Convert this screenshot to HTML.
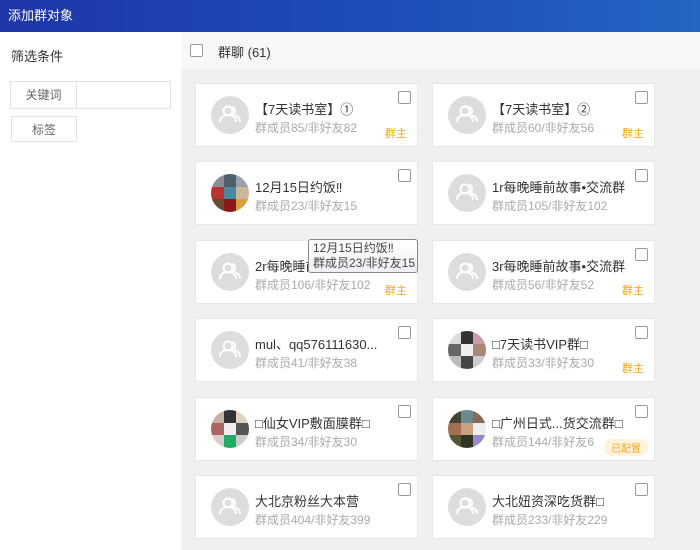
<!DOCTYPE html><html><head><meta charset="utf-8"><style>
*{margin:0;padding:0;box-sizing:border-box}
body{width:700px;height:550px;overflow:hidden;font-family:"Liberation Sans","Noto Sans CJK SC",sans-serif;background:#f0f0f0;position:relative}
.hd{position:absolute;left:0;top:0;width:700px;height:32px;background:linear-gradient(90deg,#1d36a8,#1f4fb8 60%,#2366c4);color:#fff;font-size:13px;line-height:32px;padding-left:8px}
.lp{position:absolute;left:0;top:32px;width:181px;height:518px;background:#fff}
.lp .t{position:absolute;left:11px;top:14px;font-size:13px;color:#333}
.box{position:absolute;border:1px solid #e3e3e3;font-size:12px;color:#666;text-align:center;line-height:26px}
.th{position:absolute;left:181px;top:32px;width:519px;height:37px;background:#f7f7f7;font-size:13px;color:#333}
.cb{position:absolute;width:13px;height:13px;border:1px solid #999;border-radius:2px;background:#fff}
.card{position:absolute;width:223px;height:64px;background:#fff;border:1px solid #e8e8e8}
.av{position:absolute;left:15px;top:12px;width:38px;height:38px;border-radius:50%;background:#ddd;overflow:hidden}
.nm{position:absolute;left:59px;top:15px;font-size:13px;color:#333;white-space:nowrap}
.sb{position:absolute;left:59px;top:35px;font-size:12px;color:#aaa;white-space:nowrap}
.card .cb{left:202px;top:7px}
.tag{position:absolute;right:10px;bottom:5px;font-size:11px;color:#f5a623}
.pill{position:absolute;right:6px;bottom:4px;font-size:10px;color:#f5a623;background:#fff3dc;border-radius:8px;padding:1px 7px}
.mz{display:grid;grid-template-columns:repeat(3,1fr);width:38px;height:38px}
</style></head><body>
<div class="hd">添加群对象</div>
<div class="lp"><div class="t">筛选条件</div>
<div class="box" style="left:10px;top:49px;width:161px;height:28px"><div style="width:66px;border-right:1px solid #e3e3e3">关键词</div></div>
<div class="box" style="left:11px;top:84px;width:66px;height:26px">标签</div></div>
<div class="th"><div class="cb" style="left:9px;top:12px"></div><div style="position:absolute;left:37px;top:10px">群聊 (61)</div></div>
<svg width="0" height="0" style="position:absolute"><defs><symbol id="u" viewBox="0 0 38 38"><g fill="none" stroke="#fff" stroke-width="2"><circle cx="17" cy="15" r="4.5"/><path d="M9 26c0-5 3.5-7 8-7s8 2 8 7M21 10.8a4.5 4.5 0 0 1 0 8.5M24 19.5c3 .8 5 3 5 6.5"/></g></symbol></defs></svg>

<div class="card" style="left:195px;top:83px"><div class="av"><svg width="38" height="38"><use href="#u"/></svg></div><div class="nm">【7天读书室】①</div><div class="sb">群成员85/非好友82</div><div class="cb"></div><div class="tag">群主</div></div>
<div class="card" style="left:432px;top:83px"><div class="av"><svg width="38" height="38"><use href="#u"/></svg></div><div class="nm">【7天读书室】②</div><div class="sb">群成员60/非好友56</div><div class="cb"></div><div class="tag">群主</div></div>

<div class="card" style="left:195px;top:161px"><div class="av"><div class="mz"><i style="background:#8a8f96"></i><i style="background:#50606a"></i><i style="background:#9aa3ad"></i><i style="background:#b33"></i><i style="background:#4a8aa0"></i><i style="background:#c9b79a"></i><i style="background:#6a4a30"></i><i style="background:#8a1a1a"></i><i style="background:#d9a040"></i></div></div><div class="nm">12月15日约饭‼</div><div class="sb">群成员23/非好友15</div><div class="cb"></div></div>
<div class="card" style="left:432px;top:161px"><div class="av"><svg width="38" height="38"><use href="#u"/></svg></div><div class="nm">1r每晚睡前故事•交流群</div><div class="sb">群成员105/非好友102</div><div class="cb"></div></div>

<div class="card" style="left:195px;top:240px"><div class="av"><svg width="38" height="38"><use href="#u"/></svg></div><div class="nm">2r每晚睡前</div><div class="sb">群成员106/非好友102</div><div class="cb"></div><div class="tag">群主</div></div>
<div class="card" style="left:432px;top:240px"><div class="av"><svg width="38" height="38"><use href="#u"/></svg></div><div class="nm">3r每晚睡前故事•交流群</div><div class="sb">群成员56/非好友52</div><div class="cb"></div><div class="tag">群主</div></div>
<div style="position:absolute;left:308px;top:239px;width:110px;height:34px;border:1px solid #888;border-radius:3px;background:linear-gradient(#fff,#eef0f4);font-size:12px;color:#444;padding:1px 4px;line-height:15px;white-space:nowrap;overflow:hidden">12月15日约饭‼<br>群成员23/非好友15</div>

<div class="card" style="left:195px;top:318px"><div class="av"><svg width="38" height="38"><use href="#u"/></svg></div><div class="nm">mul、qq576111630...</div><div class="sb">群成员41/非好友38</div><div class="cb"></div></div>
<div class="card" style="left:432px;top:318px"><div class="av"><div class="mz"><i style="background:#ddd"></i><i style="background:#333"></i><i style="background:#c9a"></i><i style="background:#666"></i><i style="background:#eee"></i><i style="background:#a87"></i><i style="background:#bbb"></i><i style="background:#444"></i><i style="background:#ccc"></i></div></div><div class="nm">□7天读书VIP群□</div><div class="sb">群成员33/非好友30</div><div class="cb"></div><div class="tag">群主</div></div>

<div class="card" style="left:195px;top:397px"><div class="av"><div class="mz"><i style="background:#c8b0a0"></i><i style="background:#333"></i><i style="background:#e0d0c0"></i><i style="background:#a66"></i><i style="background:#eee"></i><i style="background:#555"></i><i style="background:#dcc"></i><i style="background:#2a6"></i><i style="background:#ccc"></i></div></div><div class="nm">□仙女VIP敷面膜群□</div><div class="sb">群成员34/非好友30</div><div class="cb"></div></div>
<div class="card" style="left:432px;top:397px"><div class="av"><div class="mz"><i style="background:#443"></i><i style="background:#6a8a90"></i><i style="background:#8a6a50"></i><i style="background:#a07050"></i><i style="background:#c9a080"></i><i style="background:#eee"></i><i style="background:#553"></i><i style="background:#332"></i><i style="background:#98c"></i></div></div><div class="nm">□广州日式...货交流群□</div><div class="sb">群成员144/非好友6</div><div class="cb"></div><div class="pill">已配置</div></div>

<div class="card" style="left:195px;top:475px"><div class="av"><svg width="38" height="38"><use href="#u"/></svg></div><div class="nm">大北京粉丝大本营</div><div class="sb">群成员404/非好友399</div><div class="cb"></div></div>
<div class="card" style="left:432px;top:475px"><div class="av"><svg width="38" height="38"><use href="#u"/></svg></div><div class="nm">大北妞资深吃货群□</div><div class="sb">群成员233/非好友229</div><div class="cb"></div></div>
</body></html>
